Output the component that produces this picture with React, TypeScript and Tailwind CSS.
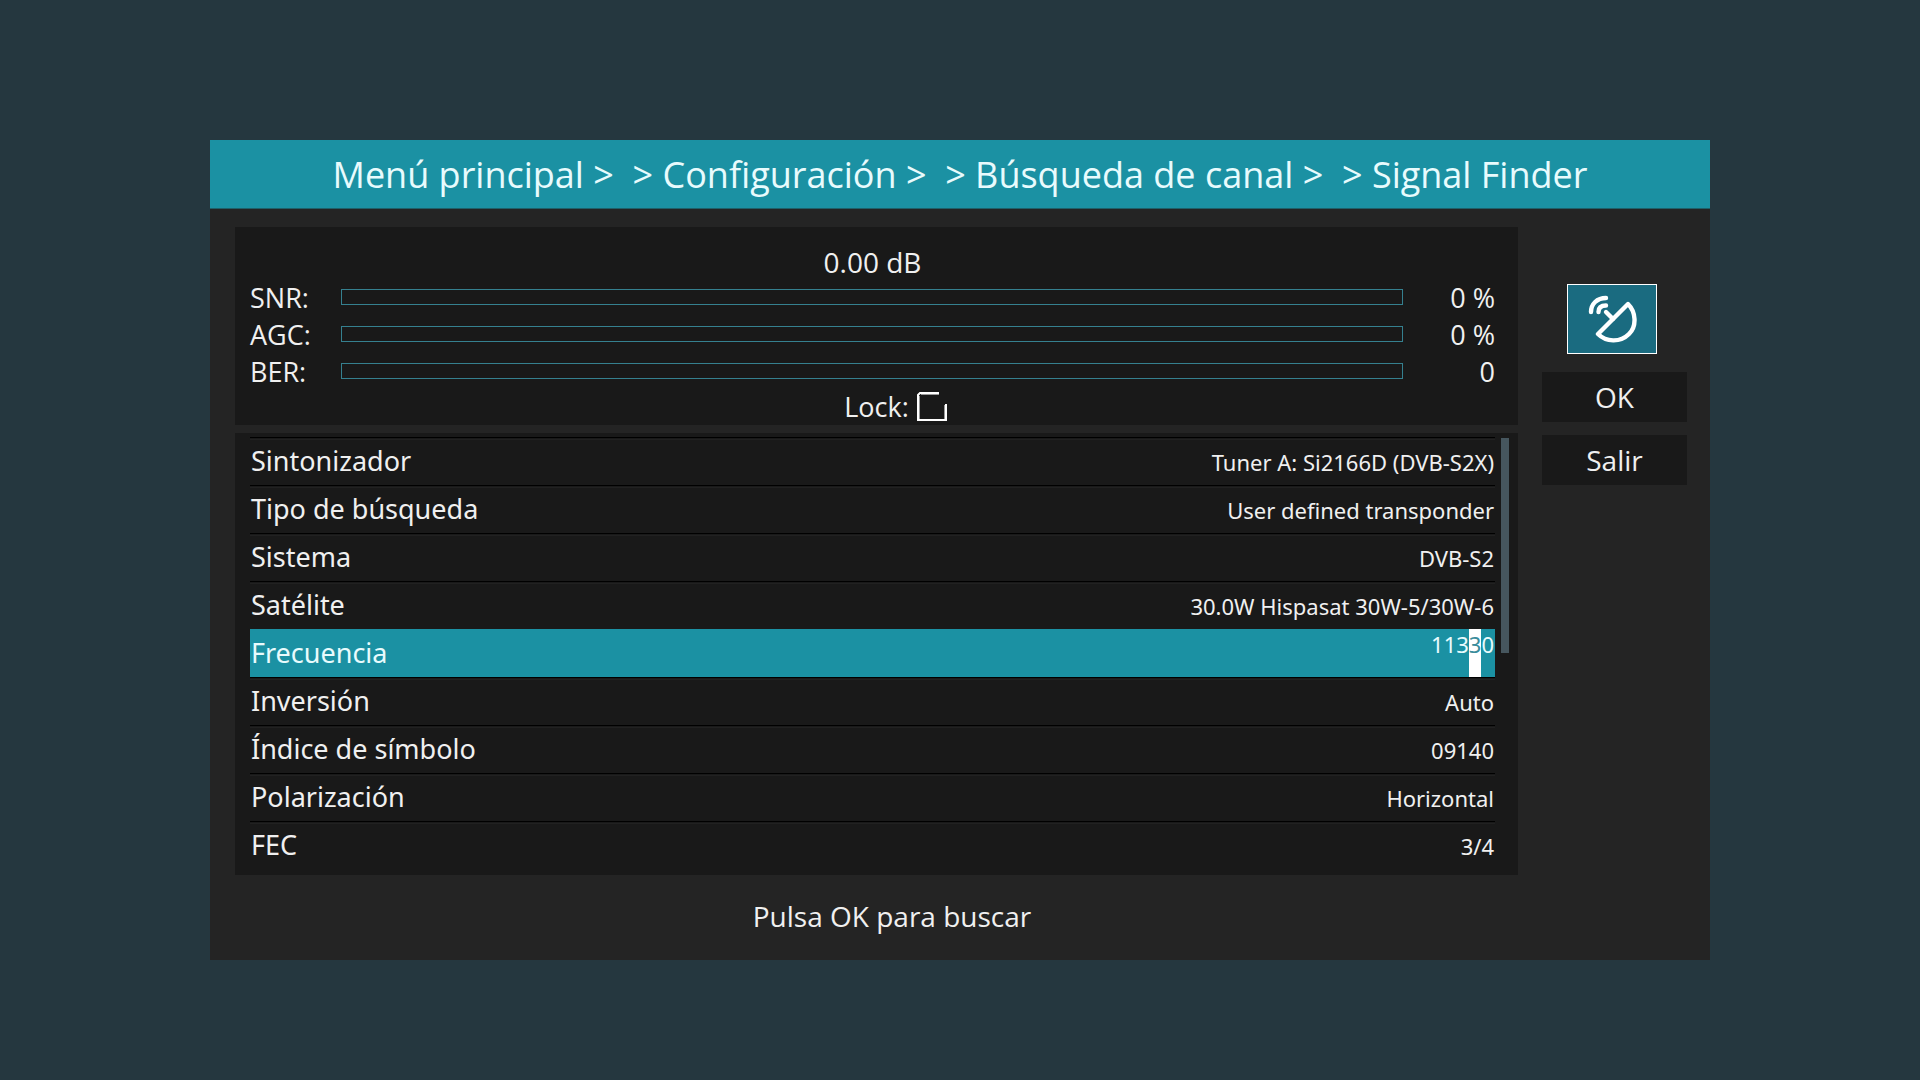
const meters = [
  { label: "SNR:", text: "0 %", value: 0 },
  { label: "AGC:", text: "0 %", value: 0 },
  { label: "BER:", text: "0", value: 0 },
];

const settings = [
  { label: "Sintonizador", value: "Tuner A: Si2166D (DVB-S2X)" },
  { label: "Tipo de búsqueda", value: "User defined transponder" },
  { label: "Sistema", value: "DVB-S2" },
  { label: "Satélite", value: "30.0W Hispasat 30W-5/30W-6" },
  { label: "Frecuencia", value: "11330", cursor: 3 },
  { label: "Inversión", value: "Auto" },
  { label: "Índice de símbolo", value: "09140" },
  { label: "Polarización", value: "Horizontal" },
  { label: "FEC", value: "3/4" },
];

type Setting = { label: string; value: string; cursor?: number };

function Meter({ label, text, value }: { label: string; text: string; value: number }) {
  return (
    <div className="flex h-[37px] items-center leading-[34px]">
      <span className="w-[91px] pt-[3px]">{label}</span>
      <div
        role="meter"
        aria-label={label}
        aria-valuenow={value}
        className="h-4 flex-1 border border-[#35808f] bg-[#191919]"
      >
        <div className="h-full bg-[#1b91a3]" style={{ width: `${value}%` }} />
      </div>
      <span className="w-[92px] pt-[3px] text-right">{text}</span>
    </div>
  );
}

function Row({ label, value, cursor }: Setting) {
  // row being edited: highlighted, with a block cursor on one digit
  if (cursor !== undefined) {
    return (
      <li className="flex h-12 justify-between bg-[#1b91a3] px-px text-[#e8fbfd]">
        <span className="text-[27px] leading-[48px]">{label}</span>
        <span className="flex text-[22px] leading-[30px]">
          {value.slice(0, cursor)}
          <span className="bg-white text-[#3a8c9b]">{value[cursor]}</span>
          {value.slice(cursor + 1)}
        </span>
      </li>
    );
  }

  return (
    <li className="flex h-12 items-baseline justify-between border-t border-black px-px shadow-[inset_0_1px_#191919,inset_0_2px_#212121]">
      <span className="text-[27px] leading-[46px]">{label}</span>
      <span className="text-[22px]">{value}</span>
    </li>
  );
}

function DishIcon() {
  return (
    <svg viewBox="0 0 50 50" className="size-[50px]" fill="none" stroke="#fff" strokeWidth="4.4" strokeLinecap="round" strokeLinejoin="round">
      <path d="M41 10 11 40C19 48 33 49 42 40C50 32 49 18 41 10Z" />
      <path d="M26 25 19 18" />
      <path d="M4 18C4 10 10 4 19 4" />
      <path d="M11.500 18C11.500 14 14 11.500 19 11.500" />
    </svg>
  );
}

function LockBox() {
  return (
    <svg viewBox="0 0 30 30" className="size-[30px]" fill="none">
      <path d="M22 2.500H4M2.500 4V27M27.500 13V27" stroke="#999" strokeWidth="1" />
      <path d="M22 1H3L1 3V28H29V12" stroke="#fff" strokeWidth="2" />
    </svg>
  );
}

export default function App() {
  return (
    <main className="min-h-screen bg-[#25373f] px-[210px] py-[140px] font-['Open_Sans',sans-serif] text-[#f0f0f0]">
      <div className="bg-[#242424]">
        <h1 className="border-b border-[#1f5f69] bg-[#1b91a3] pt-[2px] text-center text-[36px] leading-[66px] whitespace-pre text-[#e8fbfd]">
          {"Menú principal >  > Configuración >  > Búsqueda de canal >  > Signal Finder"}
        </h1>

        <div className="flex gap-6 pt-[18px] pr-[23px] pl-[25px]">
          <div className="flex flex-1 flex-col gap-2">
            <section className="h-[198px] bg-[#191919] pt-5 text-[27px]">
              <div className="pr-[23px] pl-[15px]">
                <p className="text-center text-[28px] leading-[31px]">0.00 dB</p>
                {meters.map((m) => (
                  <Meter key={m.label} {...m} />
                ))}
              </div>
              <div className="grid grid-cols-[1fr_auto_1fr] items-center gap-2 pt-[3px] leading-[30px]">
                <span className="col-start-2">Lock:</span>
                <LockBox />
              </div>
            </section>

            <section className="flex gap-[6px] bg-[#191919] pt-1 pr-[9px] pb-[6px] pl-[15px] font-['Noto_Sans',sans-serif]">
              <ul className="flex-1">
                {settings.map((s) => (
                  <Row key={s.label} {...s} />
                ))}
              </ul>
              <div className="mt-px h-[215px] w-2 bg-[#46565e]" />
            </section>
          </div>

          <div className="flex w-[145px] flex-col gap-[13px] pt-[57px]">
            <button aria-label="Signal Finder" className="mb-[5px] ml-[25px] flex h-[70px] w-[90px] items-center justify-center border border-white bg-[#1a6b80]">
              <DishIcon />
            </button>
            <button className="h-[50px] bg-[#191919] text-[28px]">OK</button>
            <button className="h-[50px] bg-[#191919] text-[28px]">Salir</button>
          </div>
        </div>

        <p className="mr-[136px] pt-[21px] pb-6 text-center text-[28px] leading-[40px]">Pulsa OK para buscar</p>
      </div>
    </main>
  );
}
